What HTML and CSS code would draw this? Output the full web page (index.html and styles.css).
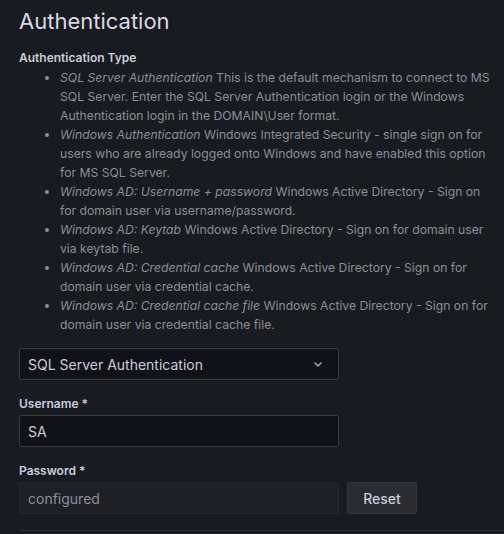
FILE: index.html
```html
<!DOCTYPE html>
<html>
<head>
<meta charset="utf-8">
<link rel="stylesheet" href="styles.css">
</head>
<body>
<div class="page">
  <h3 class="title">Authentication</h3>
  <div class="field">
    <div class="label">Authentication Type</div>
    <ul class="desc">
      <li><em>SQL Server Authentication</em> This is the default mechanism to connect to MS SQL Server. Enter the SQL Server Authentication login or the Windows Authentication login in the DOMAIN\User format.</li>
      <li><em>Windows Authentication</em> Windows Integrated Security - single sign on for users who are already logged onto Windows and have enabled this option for MS SQL Server.</li>
      <li><em>Windows AD: Username + password</em> Windows Active Directory - Sign on for domain user via username/password.</li>
      <li><em>Windows AD: Keytab</em> Windows Active Directory - Sign on for domain user via keytab file.</li>
      <li><em>Windows AD: Credential cache</em> Windows Active Directory - Sign on for domain user via credential cache.</li>
      <li><em>Windows AD: Credential cache file</em> Windows Active Directory - Sign on for domain user via credential cache file.</li>
    </ul>
    <div class="select">
      <span>SQL Server Authentication</span>
      <svg class="chev" width="16" height="16" viewBox="0 0 16 16"><path d="M5 7l3 3 3-3" fill="none" stroke="#a0a0ad" stroke-width="1.6" stroke-linecap="round" stroke-linejoin="round"/></svg>
    </div>
  </div>
  <div class="field">
    <div class="label">Username *</div>
    <div class="input">SA</div>
  </div>
  <div class="field">
    <div class="label">Password *</div>
    <div class="row">
      <div class="input disabled">configured</div>
      <button class="btn">Reset</button>
    </div>
  </div>
  <hr class="divider">
</div>
</body>
</html>
```
FILE: styles.css
```css
html, body {
  margin: 0;
  padding: 0;
  background: #181b1f;
}
body {
  font-family: Inter, "Noto Sans", sans-serif;
  color: #ccccdc;
  font-size: 14px;
}
.page {
  padding: 8px 0 0 19px;
}
.title {
  margin: 0 0 16px 0;
  font-size: 22px;
  font-weight: 400;
  line-height: 26px;
  color: #d8d9e3;
}
.field {
  margin-bottom: 16px;
}
.label {
  font-size: 12px;
  font-weight: 600;
  line-height: 16px;
  color: #ccccdc;
}
.desc {
  margin: 2px 0 14px 0;
  padding-left: 41px;
  font-size: 12.2px;
  line-height: 19px;
  color: #8e8e9b;
  padding-right: 10px;
}
.desc em {
  font-style: italic;
}
.select, .input {
  box-sizing: border-box;
  width: 320px;
  height: 32px;
  background: #111217;
  border: 1px solid #3a3c42;
  border-radius: 2px;
  display: flex;
  align-items: center;
  padding: 0 8px;
  font-size: 14px;
  color: #ccccdc;
  margin-top: 3px;
}
.select {
  margin-top: 0;
  justify-content: space-between;
}
.chev {
  margin-right: 4px;
}
.input.disabled {
  background: #1e2026;
  border-color: #26282e;
  color: #8e8e9b;
  margin-top: 0;
}
.row {
  display: flex;
  align-items: center;
  gap: 8px;
  margin-top: 3px;
}
.btn {
  height: 32px;
  width: 70px;
  background: #2a2c32;
  border: 1px solid #33363c;
  border-radius: 2px;
  color: #ccccdc;
  font-family: Inter, sans-serif;
  font-size: 14px;
  font-weight: 500;
}
.divider {
  border: none;
  border-top: 1px solid #2c2e34;
  margin: 0;
}
```
